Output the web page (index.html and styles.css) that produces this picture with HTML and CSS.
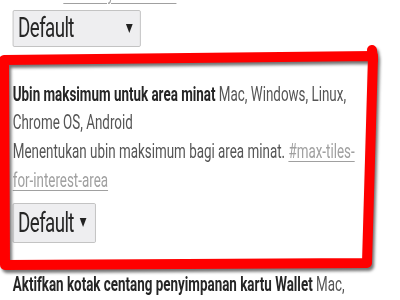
FILE: index.html
```html
<!DOCTYPE html>
<html lang="id">
<head>
<meta charset="utf-8">
<title>Flags</title>
<link rel="stylesheet" href="styles.css">
</head>
<body>
<div class="page">
  <div class="exp exp-top">
    <p class="desc">elemen. <a class="anchor" href="#overlay-scrollbars">#overlay-scrollbars</a></p>
    <div class="select select-wide"><span class="sel-text">Default</span><span class="sel-arrow"></span></div>
  </div>
  <div class="exp exp-main">
    <p class="title-line"><span class="name">Ubin maksimum untuk area minat</span> <span class="platforms">Mac, Windows, Linux,<br>Chrome OS, Android</span></p>
    <p class="desc">Menentukan ubin maksimum bagi area minat. <a class="anchor" href="#max-tiles-for-interest-area">#max-tiles-<br>for-interest-area</a></p>
    <div class="select"><span class="sel-text">Default</span><span class="sel-arrow"></span></div>
  </div>
  <div class="exp exp-next">
    <p class="title-line"><span class="name">Aktifkan kotak centang penyimpanan kartu Wallet</span> <span class="platforms">Mac,</span></p>
  </div>
</div>
<svg class="frame" width="400" height="300" viewBox="0 0 400 300" aria-hidden="true">
  <path d="M4 60 L373 56 L367 263 L5 265 Z" />
  <path d="M372 50 L373 60" />
</svg>
</body>
</html>
```

FILE: styles.css
```css
html, body {
  margin: 0;
  padding: 0;
  background: #ffffff;
  overflow: hidden;
  width: 400px;
  height: 300px;
}

body {
  position: relative;
  font-family: Roboto, "Liberation Sans", sans-serif;
}

.page {
  display: flow-root;
  width: 578px;
  padding-left: 19px;
  transform: scaleX(0.67);
  transform-origin: 0 0;
  font-size: 20px;
  line-height: 28.7px;
  color: #555555;
}

.exp p {
  margin: 0;
}

.exp-top {
  margin-top: -21px;
}

.exp-main {
  margin-top: 33px;
}

.exp-next {
  margin-top: 27px;
}

.name {
  font-weight: 700;
  color: #262626;
}

.platforms {
  color: #555555;
}

.desc {
  color: #555555;
}

.anchor {
  color: #a0a0a0;
  text-decoration: underline;
  text-decoration-thickness: 1px;
  text-underline-offset: 3px;
}

.select {
  display: inline-flex;
  align-items: center;
  box-sizing: border-box;
  height: 40px;
  margin-top: 8px;
  padding: 0 13px 0 7px;
  gap: 9px;
  background: #eeeef0;
  border: 1px solid #b9b9b9;
  border-radius: 2px;
  color: #262626;
  font-size: 28px;
  letter-spacing: -0.9px;
}

.select-wide {
  width: 191px;
  height: 37px;
  margin-top: 2px;
  padding-right: 11px;
  justify-content: space-between;
}

.sel-text {
  line-height: 1;
}

.sel-arrow {
  width: 0;
  height: 0;
  border-left: 5px solid transparent;
  border-right: 5px solid transparent;
  border-top: 9px solid #222;
}

.frame {
  position: absolute;
  left: 0;
  top: 0;
  pointer-events: none;
  filter: drop-shadow(2px 3px 1.5px rgba(0, 0, 0, 0.55));
}

.frame path {
  fill: none;
  stroke: #ff0000;
  stroke-width: 10;
  stroke-linejoin: round;
  stroke-linecap: round;
}
```
